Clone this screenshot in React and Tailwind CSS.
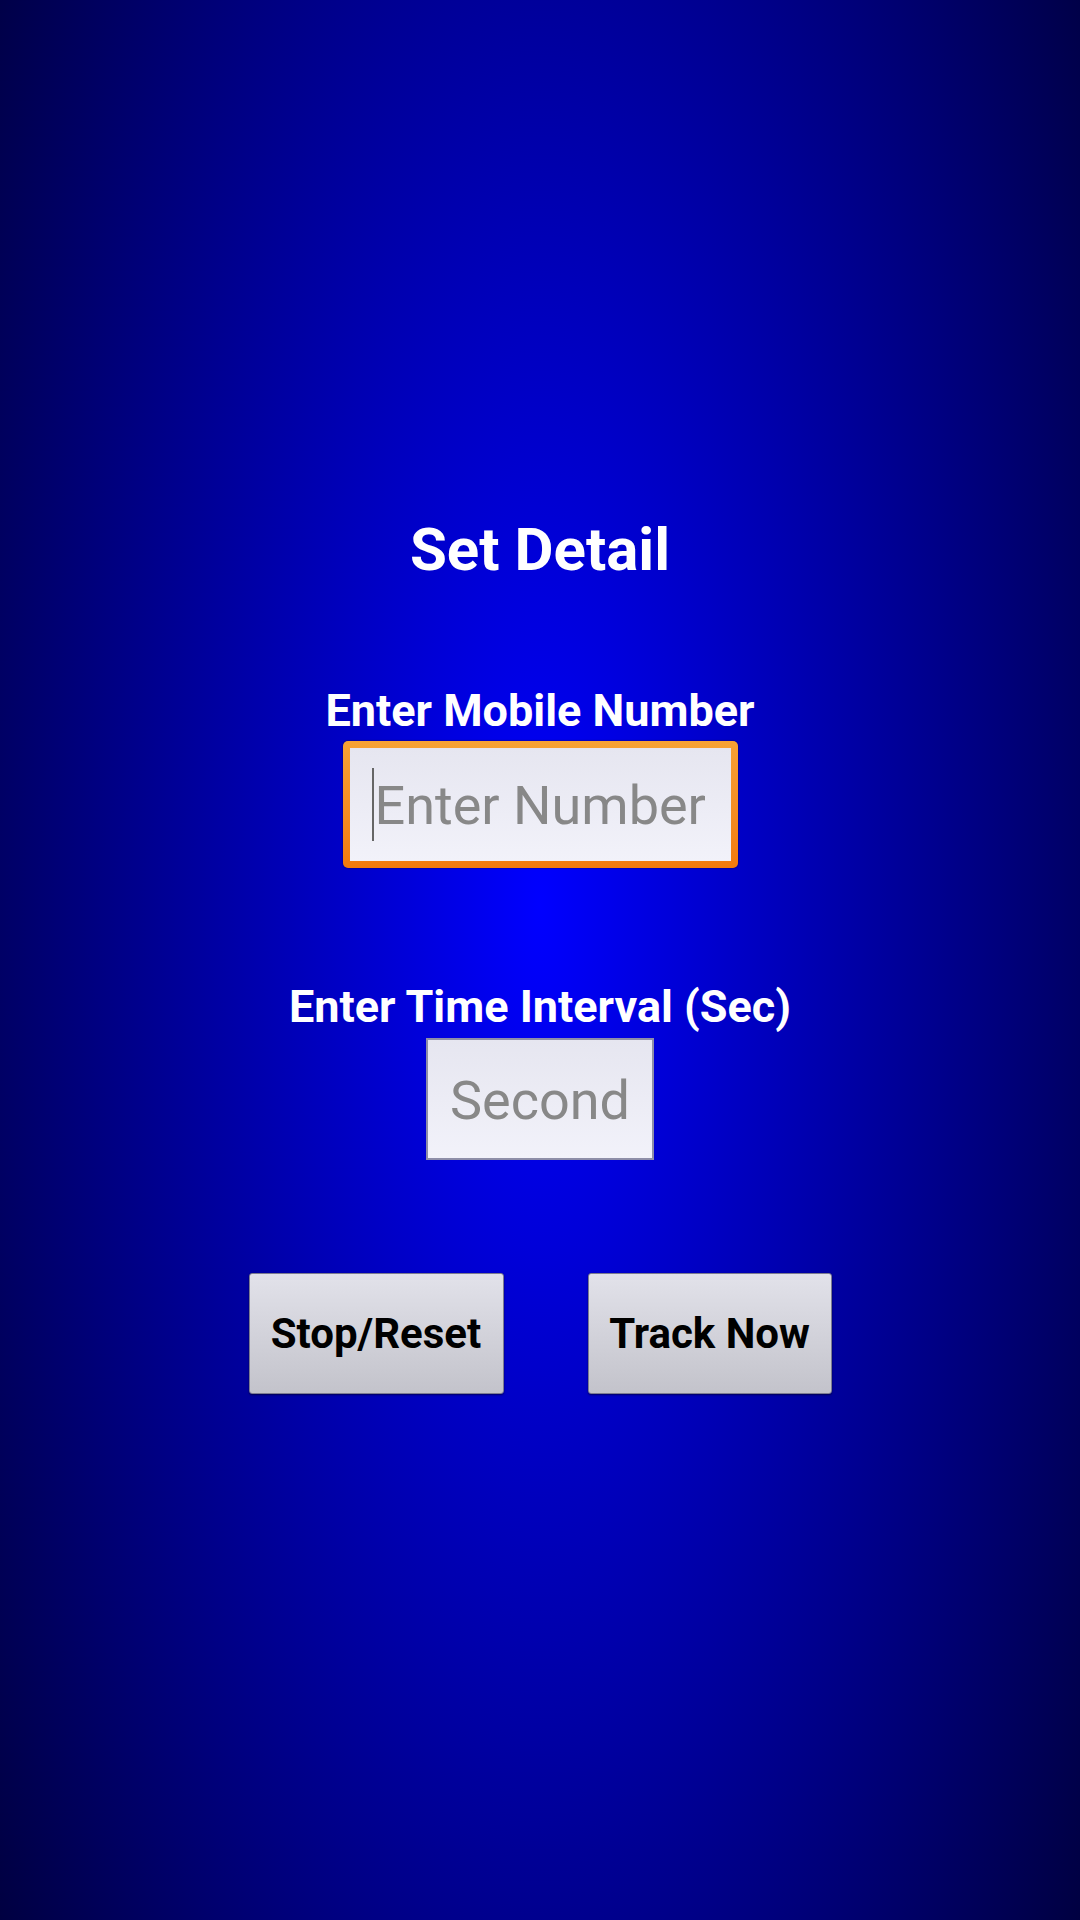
import React from "react";

const SetDetail = () => {
  return (
    <div className="w-full h-[1920px] flex flex-col items-center bg-[radial-gradient(ellipse_900px_2300px_at_540px_905px,#0000ff_0%,#000000_100%)] font-['Roboto','Liberation_Sans',sans-serif]">
      {/* Title */}
      <h1 className="mt-[520px] text-[60px] leading-none font-bold text-white">
        Set Detail
      </h1>

      {/* Mobile number */}
      <p className="mt-[108px] text-[45px] leading-none font-bold text-white">
        Enter Mobile Number
      </p>
      <div className="mt-[8px] w-[395px] h-[127px] rounded-[5px] p-[7px] bg-gradient-to-b from-[#f7a234] to-[#f27a0c] shadow-[0_0_2px_rgba(0,0,0,0.6)]">
        <div className="w-full h-full flex items-center pl-[22px] bg-gradient-to-b from-[#e6e6f0] to-[#f2f2fa]">
          <span className="w-[2px] h-[73px] bg-[#666]" />
          <span className="ml-[1px] pt-[3px] text-[54px] leading-none text-[#888888]">
            Enter Number
          </span>
        </div>
      </div>

      {/* Interval */}
      <p className="mt-[116px] text-[45px] leading-none font-bold text-white">
        Enter Time Interval (Sec)
      </p>
      <div className="mt-[9px] w-[228px] h-[122px] flex items-center justify-center pt-[4px] border-2 border-[#8e8ea8] bg-gradient-to-b from-[#e6e6f0] to-[#f2f2fa]">
        <span className="text-[54px] leading-none text-[#888888]">Second</span>
      </div>

      {/* Buttons */}
      <div className="mt-[113px] flex gap-[84px]">
        <button className="w-[255px] h-[121px] flex items-center justify-center rounded-[3px] border border-[#7c7c90] bg-gradient-to-b from-[#e2e2ea] to-[#c3c3cb] shadow-[0_1px_2px_rgba(0,0,0,0.5)] text-[42px] leading-none font-bold text-black">
          Stop/Reset
        </button>
        <button className="w-[244px] h-[121px] flex items-center justify-center rounded-[3px] border border-[#7c7c90] bg-gradient-to-b from-[#e2e2ea] to-[#c3c3cb] shadow-[0_1px_2px_rgba(0,0,0,0.5)] text-[42px] leading-none font-bold text-black">
          Track Now
        </button>
      </div>
    </div>
  );
};

export default function App() {
  return <SetDetail />;
}
